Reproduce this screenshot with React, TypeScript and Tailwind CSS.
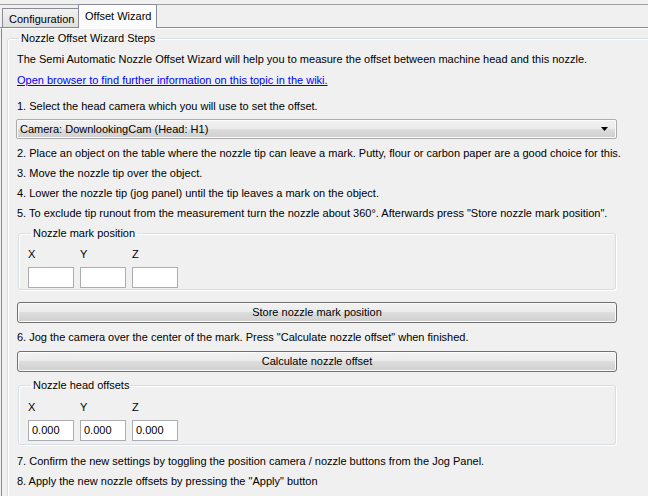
import React from 'react';

const btnBg =
  'bg-[linear-gradient(to_bottom,#f2f2f2_0%,#ebebeb_50%,#dddddd_50%,#cfcfcf_100%)]';

const Line = ({ children, className = '' }: { children: React.ReactNode; className?: string }) => (
  <div className={`h-[20px] leading-[20px] whitespace-nowrap ${className}`}>{children}</div>
);

const Button = ({ label, className = '' }: { label: string; className?: string }) => (
  <div
    className={`h-[21px] w-[600px] rounded-[3px] border border-[#707070] ${btnBg} shadow-[inset_0_0_0_1px_#fbfbfb] flex items-center justify-center ${className}`}
  >
    {label}
  </div>
);

const Field = ({ value }: { value?: string }) => (
  <div className="h-[21px] w-[46px] border border-[#abadb3] bg-white pl-[3px] leading-[19px]">
    {value}
  </div>
);

const AxisGroup = ({
  title,
  values,
  className = '',
  pad = '',
}: {
  title: string;
  values?: string[];
  className?: string;
  pad?: string;
}) => (
  <fieldset
    className={`ml-[1px] w-[598px] rounded-[3px] border border-[#d5dfe5] shadow-[inset_1px_1px_0_#ffffff,1px_1px_0_#ffffff] pl-[9px] ${pad} ${className}`}
  >
    <legend className="ml-[3px] px-[2px] leading-[14px]">{title}</legend>
    <div className="grid grid-cols-[46px_46px_46px] gap-x-[6px]">
      {['X', 'Y', 'Z'].map((a) => (
        <div key={a} className="h-[20px] leading-[20px]">
          {a}
        </div>
      ))}
      {[0, 1, 2].map((i) => (
        <div key={i} className="mt-[3px]">
          <Field value={values ? values[i] : undefined} />
        </div>
      ))}
    </div>
  </fieldset>
);

export default function App() {
  return (
    <div className="w-[648px] h-[496px] overflow-hidden bg-[#f0f0f0] text-[11px] text-black font-['Liberation_Sans',Arial,sans-serif]">
      {/* tab strip */}
      <div className="relative mt-[4px] h-[24px] border-t border-[#a0a0a0] border-b border-b-[#898c95] flex items-end pl-[2px]">
        <div className="h-[19px] w-[77px] border border-b-0 border-[#898c95] bg-[linear-gradient(to_bottom,#f2f2f2,#e0e0e0)] pl-[6px] leading-[20px]">
          Configuration
        </div>
        <div className="relative -mb-[1px] h-[24px] w-[79px] -ml-[1px] border border-b-0 border-[#898c95] bg-[#fcfcfc] pl-[6px] leading-[22px]">
          Offset Wizard
        </div>
      </div>
      {/* content panel */}
      <div className="h-[468px] border-l border-[#8a8a8a] ml-[1px] border-t border-t-white pl-[5px] pt-[2px]">
        <fieldset className="h-[500px] w-[700px] rounded-[3px] border border-[#d5dfe5] shadow-[inset_1px_1px_0_#ffffff] pl-[9px]">
          <legend className="ml-[2px] px-[2px] leading-[14px]">Nozzle Offset Wizard Steps</legend>
          <Line className="mt-[4px]">
            The Semi Automatic Nozzle Offset Wizard will help you to measure the offset between machine head and this nozzle.
          </Line>
          <Line className="mt-[1px]">
            <span className="text-[#0000ff] underline">Open browser to find further information on this topic in the wiki.</span>
          </Line>
          <Line className="mt-[6px]">1. Select the head camera which you will use to set the offset.</Line>
          <div
            className={`mt-[3px] h-[20px] w-[601px] -ml-[1px] rounded-[2px] border border-[#acacac] ${btnBg} shadow-[inset_0_0_0_1px_#fbfbfb] flex items-center justify-between pl-[3px] pr-[7px]`}
          >
            <span>Camera: DownlookingCam (Head: H1)</span>
            <svg width="8" height="5" viewBox="0 0 8 5">
              <path d="M0 0h7L3.5 4z" fill="#000" />
            </svg>
          </div>
          <Line className="mt-[4px]">
            2. Place an object on the table where the nozzle tip can leave a mark. Putty, flour or carbon paper are a good choice for this.
          </Line>
          <Line>3. Move the nozzle tip over the object.</Line>
          <Line>4. Lower the nozzle tip (jog panel) until the tip leaves a mark on the object.</Line>
          <Line>
            5. To exclude tip runout from the measurement turn the nozzle about 360°. Afterwards press "Store nozzle mark position".
          </Line>
          <AxisGroup title="Nozzle mark position" className="mt-[3px]" pad="pt-[4px] pb-[1px]" />
          <Button label="Store nozzle mark position" className="mt-[12px]" />
          <Line className="mt-[4px]">6. Jog the camera over the center of the mark. Press "Calculate nozzle offset" when finished.</Line>
          <Button label="Calculate nozzle offset" className="mt-[4px]" />
          <AxisGroup
            title="Nozzle head offsets"
            values={['0.000', '0.000', '0.000']}
            className="mt-[6px]"
            pad="pt-[5px] pb-[3px]"
          />
          <Line className="mt-[6px]">7. Confirm the new settings by toggling the position camera / nozzle buttons from the Jog Panel.</Line>
          <Line>8. Apply the new nozzle offsets by pressing the "Apply" button</Line>
        </fieldset>
      </div>
    </div>
  );
}
